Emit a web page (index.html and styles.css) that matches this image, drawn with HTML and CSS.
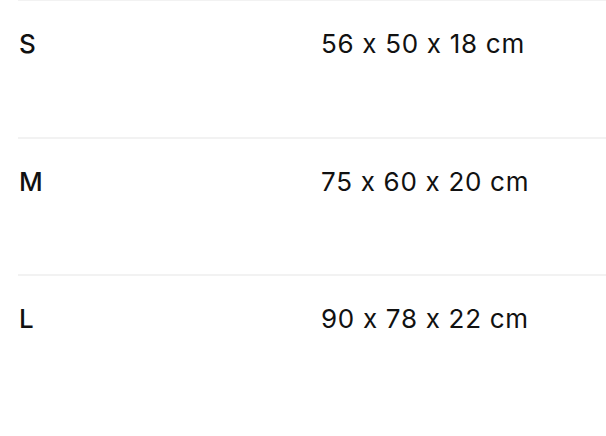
FILE: index.html
```html
<!DOCTYPE html>
<html>
<head>
<meta charset="utf-8">
<link rel="stylesheet" href="styles.css">
</head>
<body>
<div class="sizes">
  <div class="row"><div class="label">S</div><div class="value">56 x 50 x 18 cm</div></div>
  <div class="row"><div class="label">M</div><div class="value">75 x 60 x 20 cm</div></div>
  <div class="row"><div class="label">L</div><div class="value">90 x 78 x 22 cm</div></div>
</div>
</body>
</html>
```
FILE: styles.css
```css
html, body {
  margin: 0;
  background: #fff;
}
body {
  font-family: Inter, "Liberation Sans", sans-serif;
  color: #111;
  font-feature-settings: "calt" 0;
}
.sizes {
  margin-top: -1px;
  padding-left: 18px;
}
.row {
  display: grid;
  grid-template-columns: 303px 1fr;
  box-sizing: border-box;
  height: 137.5px;
  border-top: 2px solid #f2f2f2;
  padding-top: 27px;
  font-size: 26px;
  line-height: 32px;
}
.label {
  font-weight: 500;
  padding-left: 1px;
}
.value {
  font-weight: 400;
  letter-spacing: 0.7px;
}
```
